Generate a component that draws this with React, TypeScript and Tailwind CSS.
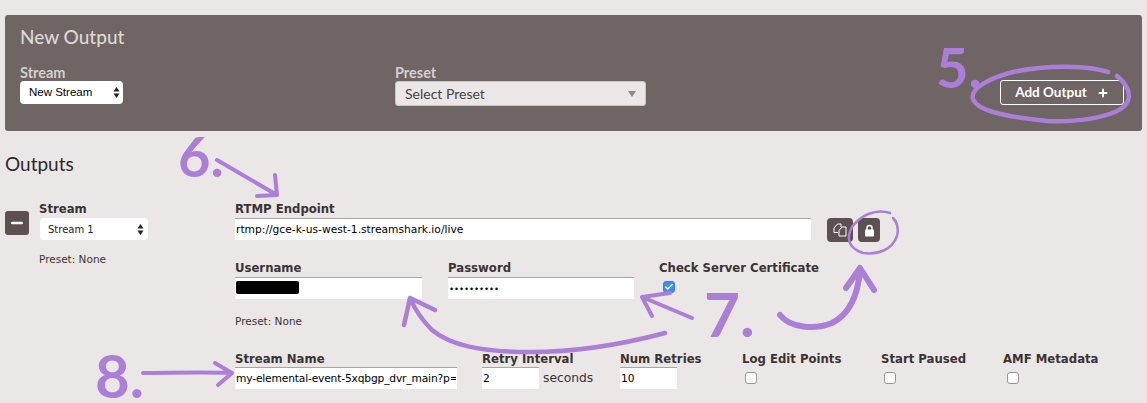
import React from 'react';
import { Plus, Minus, Check } from 'lucide-react';

const labelBase = "block text-[11.7px] leading-[16px] font-bold text-[#3b3333] font-['DejaVu_Sans',sans-serif]";
const labelClass = `${labelBase} mb-px`;
const inputBox = "block h-[22px] bg-white border-t border-t-[#a9a5a5] px-px text-black outline-none font-['DejaVu_Sans',sans-serif]";
const inputClass = `${inputBox} text-[10.7px]`;
const noteClass = "text-[10.5px] leading-[14px] text-[#3b3333] font-['DejaVu_Sans',sans-serif]";
const numeralClass = "absolute font-bold text-[#ab7fd8] font-['Lato',sans-serif]";

const UpDown = () => (
  <svg width="7" height="13" viewBox="0 0 7 13" className="shrink-0">
    <path d="M3.5 1 L6.5 5.5 H0.5 Z M3.5 12 L0.5 7.5 H6.5 Z" fill="#222" />
  </svg>
);

const Tick = ({ checked = false }: { checked?: boolean }) => (
  <span
    className={`flex h-3 w-3 items-center justify-center rounded-[3px] border ${
      checked ? 'border-[#2f7fe6] bg-[#3b8ef0]' : 'border-[#9a9696] bg-white'
    }`}
  >
    {checked && <Check className="h-2.5 w-2.5 text-white" strokeWidth={3.5} />}
  </span>
);

const Annotations = () => (
  <svg
    width="1147"
    height="403"
    viewBox="0 0 1147 403"
    fill="none"
    stroke="#ab7fd8"
    strokeLinecap="round"
    strokeLinejoin="round"
    className="pointer-events-none absolute left-0 top-0"
  >
    {/* circle round add output */}
    <path
      strokeWidth="4.5"
      d="M1108 72 C1090 66 1050 64 1013 72 C990 78 970 88 973 99 C977 110 1000 116 1047 121 C1075 122 1100 118 1115 112 C1130 106 1136 92 1117 76"
    />
    {/* 6 arrow */}
    <path strokeWidth="4" d="M217 160 L277 195 M275 175 L277 195 L257 196" />
    {/* lock circle */}
    <path
      strokeWidth="2.5"
      d="M890 213 C875 208 860 216 852 227 C846 238 848 248 863 253 C878 255 892 250 897 236 C899 228 897 222 893 218"
    />
    {/* 7 arrows */}
    <path strokeWidth="6" d="M780 315 C790 328 815 330 832 323 C850 314 858 295 860 270 M846 288 L860 268 L874 290" />
    <path strokeWidth="4.5" d="M665 333 C620 345 570 352 530 352 C480 352 450 345 432 330 C422 320 415 310 410 298 M404 325 L410 298 L435 310" />
    <path strokeWidth="4" d="M692 318 L642 297 M652 316 L642 297 L670 293" />
    {/* 8 arrow */}
    <path strokeWidth="4" d="M143 373 C170 373 200 372 231 373 M215 363 L232 373 L218 385" />
  </svg>
);

export default function App() {
  return (
    <div className="relative h-[403px] w-[1147px] overflow-hidden bg-[#ebe7e6] pt-[15px]">
      {/* New Output */}
      <section className="mx-[5px] flex h-[116px] rounded-[3px] bg-[#6f6564] pl-[15px] pr-[18px] pt-[10px] font-['Lato',sans-serif]">
        <div className="w-[375px]">
          <h2 className="text-[19px] leading-[24px] font-medium text-[#ddd7d6]">New Output</h2>
          <label className="mt-[15px] block text-[14.5px] leading-[17px] font-bold text-[#d5cfce]">Stream</label>
          <div className="flex h-[23px] w-[103px] items-center justify-between rounded-[4px] bg-white pl-[9px] pr-[3px] text-[11.5px] text-black font-['Liberation_Sans',sans-serif]">
            New Stream
            <UpDown />
          </div>
        </div>
        <div className="pt-[39px]">
          <label className="block text-[14.5px] leading-[17px] font-bold text-[#d5cfce]">Preset</label>
          <div className="flex h-[25px] w-[251px] items-center justify-between rounded-[3px] border border-[#c9c4c3] bg-[#ebe7e6] pl-[9px] pr-[9px] text-[14px] text-[#4a4242]">
            Select Preset
            <span className="h-0 w-0 border-x-[4px] border-t-[6px] border-x-transparent border-t-[#8f8a89]" />
          </div>
        </div>
        <div className="ml-auto pt-[55px]">
          <button className="flex h-[25px] w-[124px] items-center justify-center gap-2.5 rounded-[3px] border border-white text-[13.5px] font-bold text-white">
            Add Output
            <Plus className="h-3 w-3" strokeWidth={4} />
          </button>
        </div>
      </section>

      <h2 className="ml-[5px] mt-[21px] text-[19px] leading-[24px] text-[#2f2828] font-['Lato',sans-serif]">Outputs</h2>

      {/* Output row */}
      <div className="mt-[23px] flex pl-[5px]">
        <div className="w-[34px] pt-[12px]">
          <button className="flex h-6 w-6 items-center justify-center rounded-[3px] bg-[#5c5150]">
            <Minus className="h-4 w-4 text-white" strokeWidth={4} />
          </button>
        </div>
        <div className="w-[196px] pt-[2px]">
          <label className={labelClass}>Stream</label>
          <div className="ml-px flex h-[22px] w-[108px] items-center justify-between rounded-[4px] bg-white pl-2 pr-1 text-[10px] text-[#222] font-['DejaVu_Sans',sans-serif]">
            Stream 1
            <UpDown />
          </div>
          <p className={`mt-[12px] ${noteClass}`}>Preset: None</p>
        </div>
        <div>
          <label className={`${labelClass} pt-[2px]`}>RTMP Endpoint</label>
          <div className="flex items-start">
            <input readOnly value="rtmp://gce-k-us-west-1.streamshark.io/live" className={`${inputClass} w-[576px]`} />
            <button className="ml-[16px] flex h-6 w-[26px] items-center justify-center rounded-[4px] bg-[#5c5150]">
              <svg width="14" height="14" viewBox="0 0 14 14" fill="none" stroke="#fff" strokeWidth="1">
                <path d="M5 9.5 H1 V5 L4.5 1 H8 V4" />
                <path d="M6 13 V7.5 L9 4 H13 V13 Z" />
              </svg>
            </button>
            <button className="ml-[5px] flex h-6 w-[22px] items-center justify-center rounded-[4px] bg-[#5c5150]">
              <svg width="11" height="13" viewBox="0 0 11 13" fill="none">
                <path d="M3 6 V4 A2.5 2.5 0 0 1 8 4 V6" stroke="#fff" strokeWidth="1.5" />
                <rect x="1" y="5.5" width="9" height="7" rx="1" fill="#fff" />
              </svg>
            </button>
          </div>

          <div className="mt-[18px] flex">
            <div className="w-[213px]">
              <label className={labelClass}>Username</label>
              <div className={`${inputClass} relative w-[187px]`}>
                <span className="absolute left-px top-[3px] h-[13px] w-[63px] rounded-[2px] bg-black" />
              </div>
            </div>
            <div className="w-[211px]">
              <label className={labelClass}>Password</label>
              <input readOnly type="password" value="1234567890" className={`${inputBox} w-[186px] text-[8.5px]`} />
            </div>
            <div>
              <label className={labelClass}>Check Server Certificate</label>
              <div className="ml-1 mt-[5px]">
                <Tick checked />
              </div>
            </div>
          </div>

          <p className={`mt-[15px] ${noteClass}`}>Preset: None</p>

          <div className="mt-[23px] flex">
            <div className="w-[247px]">
              <label className={labelBase}>Stream Name</label>
              <input readOnly value="my-elemental-event-5xqbgp_dvr_main?p=" className={`${inputClass} w-[222px] tracking-[-0.17px]`} />
            </div>
            <div className="w-[138px]">
              <label className={labelBase}>Retry Interval</label>
              <div className="flex items-center gap-[4px]">
                <input readOnly value="2" className={`${inputClass} w-[57px]`} />
                <span className="text-[12.3px] text-[#3b3333] font-['DejaVu_Sans',sans-serif]">seconds</span>
              </div>
            </div>
            <div className="w-[122px]">
              <label className={labelBase}>Num Retries</label>
              <input readOnly value="10" className={`${inputClass} w-[57px]`} />
            </div>
            <div className="w-[139px]">
              <label className={labelBase}>Log Edit Points</label>
              <div className="ml-[3px] mt-[5px]"><Tick /></div>
            </div>
            <div className="w-[122px]">
              <label className={labelBase}>Start Paused</label>
              <div className="ml-[3px] mt-[5px]"><Tick /></div>
            </div>
            <div>
              <label className={labelBase}>AMF Metadata</label>
              <div className="ml-[4px] mt-[5px]"><Tick /></div>
            </div>
          </div>
        </div>
      </div>

      <Annotations />
      <span className={`${numeralClass} left-[936px] top-[34px] text-[56px] leading-[66px]`}>5.</span>
      <span className={`${numeralClass} left-[178px] top-[123px] text-[56px] leading-[66px]`}>6.</span>
      <span className={`${numeralClass} left-[704px] top-[278px] text-[62px] leading-[70px]`}>7.</span>
      <span className={`${numeralClass} left-[95px] top-[348px] text-[60px] leading-[54px]`}>8.</span>
    </div>
  );
}
